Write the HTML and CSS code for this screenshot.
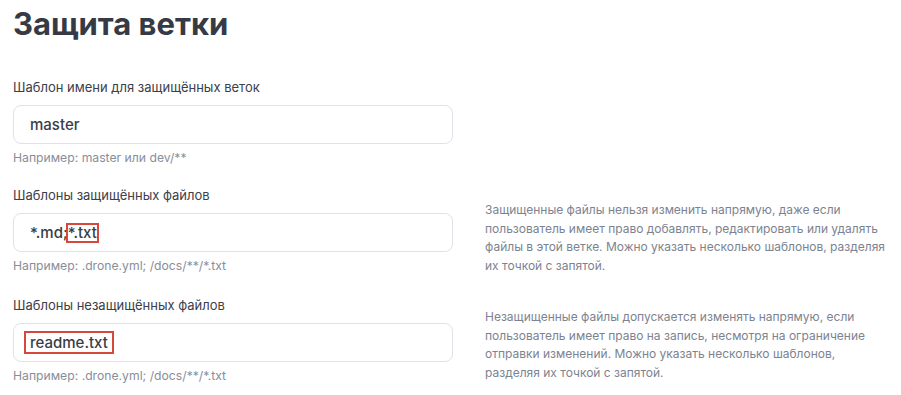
FILE: index.html
```html
<!DOCTYPE html>
<html lang="ru">
<head>
  <meta charset="UTF-8">
  <title>Защита ветки</title>
  <link rel="stylesheet" href="styles.css">
</head>
<body>
  <div class="page">
    <h1 class="title">Защита ветки</h1>

    <div class="row">
      <div class="group">
        <label class="label">Шаблон имени для защищённых веток</label>
        <div class="field">master</div>
        <div class="hint">Например: master или dev/**</div>
      </div>
    </div>

    <div class="row">
      <div class="group">
        <label class="label">Шаблоны защищённых файлов</label>
        <div class="field">*.md;<span class="mark">*.txt</span></div>
        <div class="hint">Например: .drone.yml; /docs/**/*.txt</div>
      </div>
      <p class="note">Защищенные файлы нельзя изменить напрямую, даже если пользователь имеет право добавлять, редактировать или удалять файлы в этой ветке. Можно указать несколько шаблонов, разделяя их точкой с запятой.</p>
    </div>

    <div class="row">
      <div class="group">
        <label class="label">Шаблоны незащищённых файлов</label>
        <div class="field"><span class="mark mark-wide">readme.txt</span></div>
        <div class="hint">Например: .drone.yml; /docs/**/*.txt</div>
      </div>
      <p class="note note-low">Незащищенные файлы допускается изменять напрямую, если пользователь имеет право на запись, несмотря на ограничение отправки изменений. Можно указать несколько шаблонов, разделяя их точкой с запятой.</p>
    </div>
  </div>
</body>
</html>
```

FILE: styles.css
```css
body {
  font-family: 'Inter', 'Noto Sans', sans-serif;
  background-color: #ffffff;
  color: #3a3e48;
  margin: 0;
  padding: 0;
}

.page {
  padding: 4px 13px 0;
}

.title {
  font-size: 31px;
  line-height: 40px;
  font-weight: 700;
  color: #363a45;
  margin: 0 0 34px;
}

.row {
  display: grid;
  grid-template-columns: 440px 401px;
  column-gap: 32px;
  margin-bottom: 20px;
}

.label {
  display: block;
  font-size: 13px;
  line-height: 18px;
  color: #3c404a;
  margin-bottom: 9px;
}

.field {
  box-sizing: border-box;
  height: 39px;
  display: flex;
  align-items: center;
  padding: 0 16px;
  border: 1px solid #dfe2e8;
  border-radius: 8px;
  font-size: 15px;
  font-weight: 500;
  color: #383d48;
}

.mark {
  outline: 2px solid #d5483a;
  line-height: 16px;
}

.mark-wide {
  line-height: 19px;
  padding: 0 4px;
  margin: 0 -4px;
}

.hint {
  margin-top: 6px;
  font-size: 12.2px;
  line-height: 16px;
  color: #878e9a;
}

.note {
  margin: 15px 0 0;
  font-size: 12px;
  line-height: 18.7px;
  color: #7c8390;
}

.note-low {
  margin-top: 12px;
}
```
